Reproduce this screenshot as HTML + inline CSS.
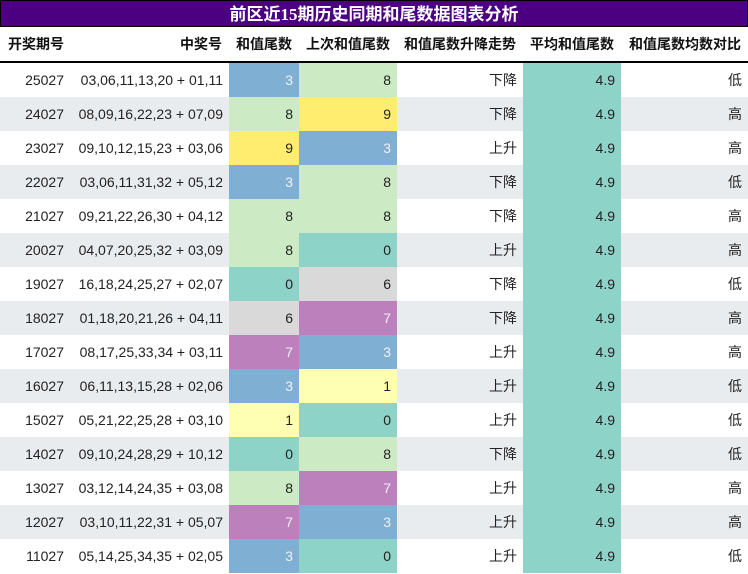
<!DOCTYPE html>
<html><head><meta charset="utf-8"><style>
body{margin:0;width:748px;height:574px;overflow:hidden;background:#fff;font-family:"Liberation Sans","Noto Sans CJK SC",sans-serif;}
.t{position:absolute;left:0;top:0;width:746px;height:25px;background:#4b0082;border:1px solid #000;color:#fff;font-weight:bold;font-size:17px;text-align:center;line-height:27px;font-family:"Liberation Serif","Noto Sans CJK SC",sans-serif;}
table{position:absolute;left:0;top:27px;border-collapse:collapse;table-layout:fixed;width:748px;font-size:14px;color:#222;}
th{height:34px;font-weight:bold;text-align:right;padding:0 7px 0 0;border-bottom:2px solid #000;color:#111;white-space:nowrap}
th:first-child{text-align:left;padding-left:8px}
td{height:34px;padding:0 6px 0 0;text-align:right;white-space:nowrap}
tr:nth-child(odd) td{background:#e9ecef}
td.c6{background:#8dd3c7!important}
.b{background:#7fb0d3!important;color:#f0f0f0}.g{background:#ccebc5!important}.y{background:#ffed6f!important}.q{background:#8dd3c7!important}.r{background:#d9d9d9!important}.p{background:#bc80bd!important;color:#f0f0f0}.l{background:#ffffb3!important}
</style></head><body>
<div class="t">前区近15期历史同期和尾数据图表分析</div>
<table>
<colgroup><col style="width:70px"><col style="width:159px"><col style="width:70px"><col style="width:98px"><col style="width:126px"><col style="width:98px"><col style="width:127px"></colgroup>
<tr><th>开奖期号</th><th>中奖号</th><th>和值尾数</th><th>上次和值尾数</th><th>和值尾数升降走势</th><th>平均和值尾数</th><th>和值尾数均数对比</th></tr>
<tr><td>25027</td><td>03,06,11,13,20 + 01,11</td><td class="b">3</td><td class="g">8</td><td>下降</td><td class="c6">4.9</td><td>低</td></tr>
<tr><td>24027</td><td>08,09,16,22,23 + 07,09</td><td class="g">8</td><td class="y">9</td><td>下降</td><td class="c6">4.9</td><td>高</td></tr>
<tr><td>23027</td><td>09,10,12,15,23 + 03,06</td><td class="y">9</td><td class="b">3</td><td>上升</td><td class="c6">4.9</td><td>高</td></tr>
<tr><td>22027</td><td>03,06,11,31,32 + 05,12</td><td class="b">3</td><td class="g">8</td><td>下降</td><td class="c6">4.9</td><td>低</td></tr>
<tr><td>21027</td><td>09,21,22,26,30 + 04,12</td><td class="g">8</td><td class="g">8</td><td>下降</td><td class="c6">4.9</td><td>高</td></tr>
<tr><td>20027</td><td>04,07,20,25,32 + 03,09</td><td class="g">8</td><td class="q">0</td><td>上升</td><td class="c6">4.9</td><td>高</td></tr>
<tr><td>19027</td><td>16,18,24,25,27 + 02,07</td><td class="q">0</td><td class="r">6</td><td>下降</td><td class="c6">4.9</td><td>低</td></tr>
<tr><td>18027</td><td>01,18,20,21,26 + 04,11</td><td class="r">6</td><td class="p">7</td><td>下降</td><td class="c6">4.9</td><td>高</td></tr>
<tr><td>17027</td><td>08,17,25,33,34 + 03,11</td><td class="p">7</td><td class="b">3</td><td>上升</td><td class="c6">4.9</td><td>高</td></tr>
<tr><td>16027</td><td>06,11,13,15,28 + 02,06</td><td class="b">3</td><td class="l">1</td><td>上升</td><td class="c6">4.9</td><td>低</td></tr>
<tr><td>15027</td><td>05,21,22,25,28 + 03,10</td><td class="l">1</td><td class="q">0</td><td>上升</td><td class="c6">4.9</td><td>低</td></tr>
<tr><td>14027</td><td>09,10,24,28,29 + 10,12</td><td class="q">0</td><td class="g">8</td><td>下降</td><td class="c6">4.9</td><td>低</td></tr>
<tr><td>13027</td><td>03,12,14,24,35 + 03,08</td><td class="g">8</td><td class="p">7</td><td>上升</td><td class="c6">4.9</td><td>高</td></tr>
<tr><td>12027</td><td>03,10,11,22,31 + 05,07</td><td class="p">7</td><td class="b">3</td><td>上升</td><td class="c6">4.9</td><td>高</td></tr>
<tr><td>11027</td><td>05,14,25,34,35 + 02,05</td><td class="b">3</td><td class="q">0</td><td>上升</td><td class="c6">4.9</td><td>低</td></tr>
</table>
</body></html>
